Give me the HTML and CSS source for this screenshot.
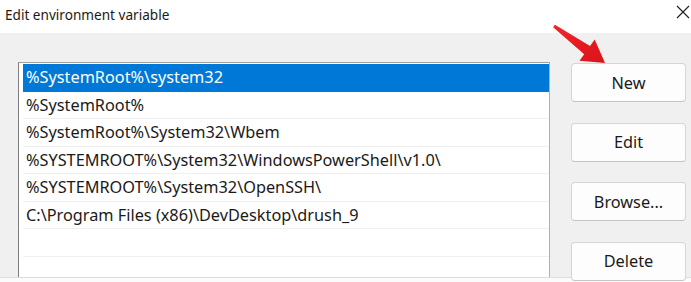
FILE: index.html
```html
<!DOCTYPE html>
<html lang="en">
<head>
    <meta charset="UTF-8">
    <meta name="viewport" content="width=device-width, initial-scale=1.0">
    <title>Edit environment variable</title>
    <link rel="stylesheet" href="styles.css">
</head>
<body>
    <div class="titlebar">
        <div class="title">Edit environment variable</div>
        <svg class="close" width="14" height="14" viewBox="0 0 14 14">
            <path d="M1 1 L13 13 M13 1 L1 13" stroke="#222" stroke-width="1.2" fill="none"/>
        </svg>
    </div>
    <div class="dialog">
        <div class="list">
            <div class="row selected">%SystemRoot%\system32</div>
            <div class="row">%SystemRoot%</div>
            <div class="row">%SystemRoot%\System32\Wbem</div>
            <div class="row">%SYSTEMROOT%\System32\WindowsPowerShell\v1.0\</div>
            <div class="row">%SYSTEMROOT%\System32\OpenSSH\</div>
            <div class="row">C:\Program Files (x86)\DevDesktop\drush_9</div>
            <div class="row"></div>
            <div class="row"></div>
        </div>
        <div class="buttons">
            <button class="btn">New</button>
            <button class="btn">Edit</button>
            <button class="btn">Browse...</button>
            <button class="btn">Delete</button>
        </div>
    </div>

    <!-- red annotation arrow pointing at the New button -->
    <svg class="arrow" width="691" height="282" viewBox="0 0 691 282">
        <defs>
            <linearGradient id="red" x1="0" y1="0" x2="1" y2="1">
                <stop offset="0" stop-color="#f2242a"/>
                <stop offset="1" stop-color="#d8141a"/>
            </linearGradient>
        </defs>
        <polygon points="554.9,24.8 590.0,46.1 594.7,39.6 605,63 579.5,60.8 584.2,54.3 553.1,27.2" fill="url(#red)"/>
    </svg>
</body>
</html>
```

FILE: styles.css
```css
body {
    margin: 0;
    width: 691px;
    height: 282px;
    overflow: hidden;
    background: #fbfbfb;
    font-family: "Noto Sans", "Open Sans", Arial, sans-serif;
    color: #1a1a1a;
}

.titlebar {
    height: 33px;
    background: #fff;
    display: flex;
    justify-content: space-between;
    align-items: flex-start;
}

.title {
    font-size: 13.6px;
    padding-left: 5px;
    padding-top: 5px;
    color: #1a1a1a;
}

.close {
    margin-top: 5px;
    margin-right: 1px;
}

.dialog {
    height: 245px;
    box-sizing: border-box;
    background: #f0f0f0;
    border-bottom: 1px solid #dcdcdc;
    display: flex;
    padding: 29px 5px 0 18px;
}

.list {
    width: 532px;
    box-sizing: border-box;
    background: #fff;
    border: 1px solid #a0a0a0;
    border-left-color: #7d7d7d;
    border-bottom: none;
    border-right-color: #b0b0b0;
    padding: 1px 0 0 4px;
    overflow: hidden;
}

.row {
    height: 27.5px;
    box-sizing: border-box;
    border-bottom: 1px solid #f0f0f0;
    padding-left: 3px;
    font-size: 16.3px;
    line-height: 27px;
    white-space: nowrap;
}

.row.selected {
    background: #0078d7;
    color: #fff;
    border-bottom-color: #0078d7;
}

.buttons {
    display: flex;
    flex-direction: column;
    gap: 20.5px;
    margin-left: 21px;
    margin-top: 1px;
}

.btn {
    width: 115px;
    height: 39px;
    flex-shrink: 0;
    background: #fdfdfd;
    border: 1px solid #d5d5d5;
    border-bottom-color: #c4c4c4;
    border-radius: 4px;
    font-family: "Noto Sans", "Open Sans", Arial, sans-serif;
    font-size: 16.3px;
    color: #1a1a1a;
    padding: 0;
}

.arrow {
    position: absolute;
    top: 0;
    left: 0;
    pointer-events: none;
}
```
